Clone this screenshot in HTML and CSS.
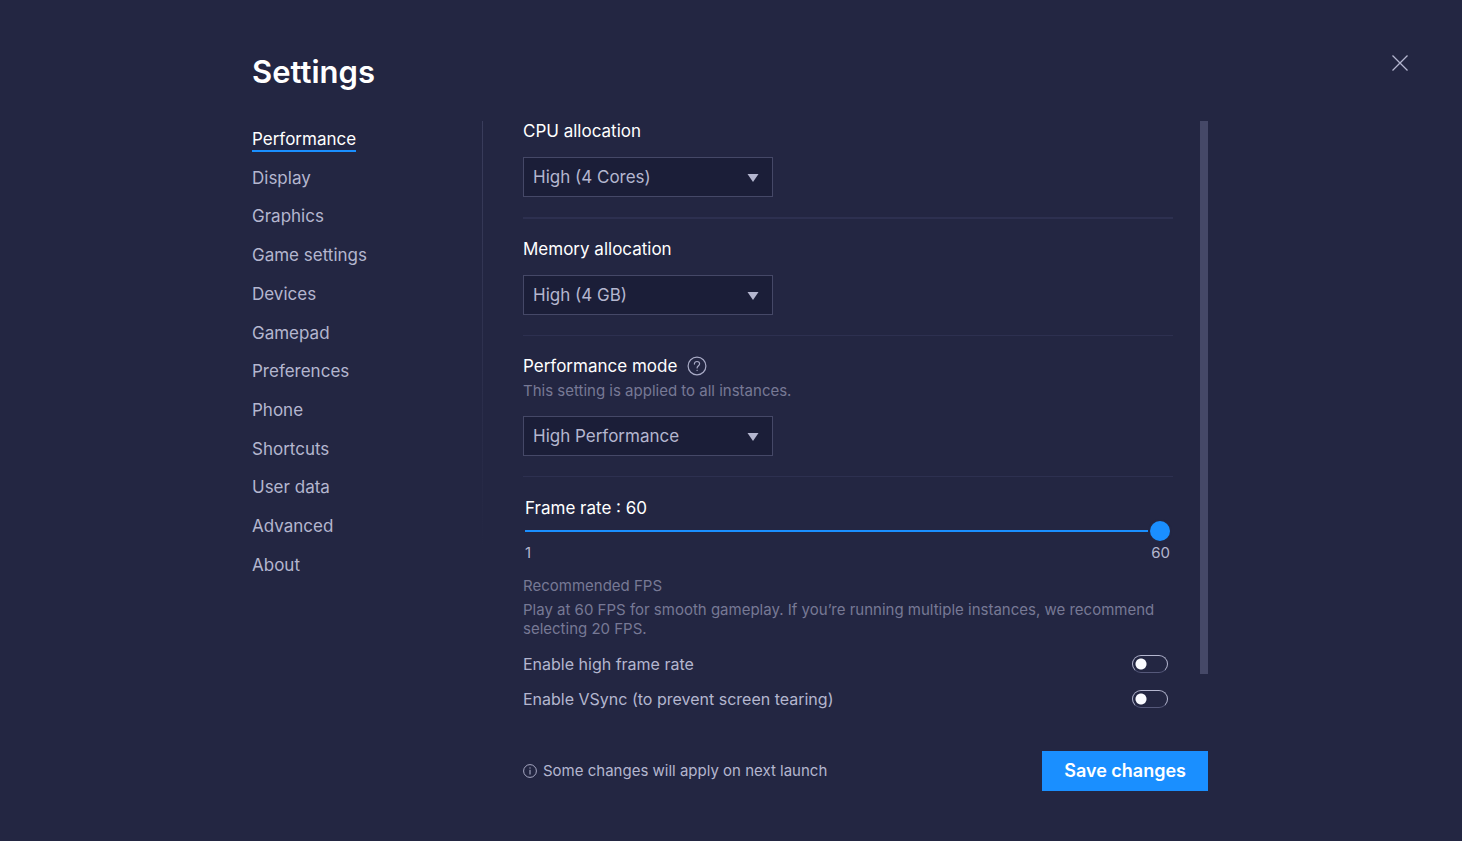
FILE: index.html
```html
<!DOCTYPE html>
<html lang="en">
<head>
<meta charset="utf-8">
<title>Settings</title>
<meta name="viewport" content="width=device-width, initial-scale=1">
<link rel="stylesheet" href="styles.css">
</head>
<body>
<div class="page">
  <header class="header">
    <h1 class="title">Settings</h1>
    <button class="close" type="button" aria-label="Close">
      <svg width="18" height="18" viewBox="0 0 18 18" fill="none" stroke="currentColor" stroke-width="1.3"><path d="M1.5 1.5 16.5 16.5M16.5 1.5 1.5 16.5"/></svg>
    </button>
  </header>
  <main class="layout">
    <nav class="nav">
      <a class="nav-link active" href="#performance">Performance</a>
      <a class="nav-link" href="#display">Display</a>
      <a class="nav-link" href="#graphics">Graphics</a>
      <a class="nav-link" href="#game">Game settings</a>
      <a class="nav-link" href="#devices">Devices</a>
      <a class="nav-link" href="#gamepad">Gamepad</a>
      <a class="nav-link" href="#preferences">Preferences</a>
      <a class="nav-link" href="#phone">Phone</a>
      <a class="nav-link" href="#shortcuts">Shortcuts</a>
      <a class="nav-link" href="#userdata">User data</a>
      <a class="nav-link" href="#advanced">Advanced</a>
      <a class="nav-link" href="#about">About</a>
    </nav>
    <div class="rule"></div>
    <form class="panel">
      <div class="scroll">
        <div class="sections">
          <section class="section first">
            <label class="label" for="cpu">CPU allocation</label>
            <div class="select-box">
              <select id="cpu" class="select"><option>High (4 Cores)</option></select>
              <svg class="arrow" width="12" height="8" viewBox="0 0 12 8" fill="currentColor"><path d="M.5 0h11L6 8z"/></svg>
            </div>
          </section>
          <section class="section">
            <label class="label" for="memory">Memory allocation</label>
            <div class="select-box">
              <select id="memory" class="select"><option>High (4 GB)</option></select>
              <svg class="arrow" width="12" height="8" viewBox="0 0 12 8" fill="currentColor"><path d="M.5 0h11L6 8z"/></svg>
            </div>
          </section>
          <section class="section">
            <div class="label-row">
              <label class="label" for="mode">Performance mode</label>
              <svg class="help" width="20" height="20" viewBox="0 0 20 20" fill="none" stroke="currentColor" stroke-width="1.2"><circle cx="10" cy="10" r="8.9"/><path d="M7.4 8.1C7.4 6.4 8.5 5.5 10 5.5s2.6.9 2.6 2.3c0 1.900-2.500 2-2.500 4.200" stroke-linecap="round"/><circle cx="10.100" cy="14.300" r=".4" fill="currentColor" stroke-width=".6"/></svg>
            </div>
            <p class="hint">This setting is applied to all instances.</p>
            <div class="select-box">
              <select id="mode" class="select"><option>High Performance</option></select>
              <svg class="arrow" width="12" height="8" viewBox="0 0 12 8" fill="currentColor"><path d="M.5 0h11L6 8z"/></svg>
            </div>
          </section>
          <section class="frame">
            <div class="slider">
              <label class="label" for="fps">Frame rate : 60</label>
              <input id="fps" class="range" type="range" min="1" max="60" value="60">
              <div class="limits"><span>1</span><span>60</span></div>
            </div>
            <p class="note">Recommended FPS</p>
            <p class="note">Play at 60 FPS for smooth gameplay. If you’re running multiple instances, we recommend selecting 20 FPS.</p>
            <div class="toggles">
              <div class="toggle-row"><label for="high">Enable high frame rate</label><input id="high" class="toggle" type="checkbox"></div>
              <div class="toggle-row"><label for="vsync">Enable VSync (to prevent screen tearing)</label><input id="vsync" class="toggle" type="checkbox"></div>
            </div>
          </section>
        </div>
        <div class="scrollbar"><div class="thumb"></div></div>
      </div>
      <footer class="footer">
        <p class="info">
          <svg width="14" height="14" viewBox="0 0 14 14" fill="none" stroke="currentColor"><circle cx="7" cy="7" r="6.400" stroke-width=".9"/><path d="M7 5.800v4.700M7 3.400v1.200"/></svg>
          <span>Some changes will apply on next launch</span>
        </p>
        <button class="save" type="submit">Save changes</button>
      </footer>
    </form>
  </main>
</div>
</body>
</html>
```
FILE: styles.css
```css
* { box-sizing: border-box; }

body {
  margin: 0;
  min-height: 100vh;
  background: #232642;
  color: #b4b6cf;
  font: 17px/20px Inter, Roboto, sans-serif;
}

h1, p { margin: 0; }

button, input, select { font: inherit; }

.page { padding: 52px 52px 50px 252px; }

.header {
  display: flex;
  justify-content: space-between;
  align-items: flex-start;
}

.title {
  color: #fff;
  font-size: 31px;
  font-weight: 600;
  line-height: 40px;
}

.close {
  display: flex;
  padding: 2px 1px;
  border: 0;
  background: none;
  color: #b4b6cf;
}

.layout {
  display: grid;
  grid-template-columns: 230px 1px 1fr;
  margin: 29px 202px 0 0;
}

.nav {
  display: flex;
  flex-direction: column;
  justify-content: space-between;
  align-items: flex-start;
  align-self: start;
  min-height: 457px;
  padding-top: 8px;
}

.nav-link {
  border-bottom: 2px solid transparent;
  color: inherit;
  line-height: 21px;
  text-decoration: none;
}

.nav-link.active {
  border-color: #1a8fff;
  color: #fff;
}

.rule {
  align-self: start;
  height: 430px;
  background: linear-gradient(#3a3d5c, #232642);
}

.panel { padding-left: 40px; }

.scroll {
  display: flex;
  justify-content: space-between;
  gap: 27px;
}

.sections { flex: 1; }

.section {
  padding-bottom: 20px;
  border-bottom: 1px solid #2d3050;
  margin-bottom: 20px;
}

.section.first { border-bottom-width: 2px; }

.label {
  display: block;
  color: #fff;
}

.label-row {
  display: flex;
  align-items: center;
  gap: 10px;
}

.help { color: #a9abc6; }

.hint, .note {
  color: #777995;
  font-size: 15px;
  line-height: 19px;
}

.hint { margin-top: 5px; }

.select-box {
  display: grid;
  align-items: center;
  width: 250px;
  margin-top: 16px;
}

.select, .arrow { grid-area: 1 / 1; }

.select {
  appearance: none;
  height: 40px;
  padding: 0 36px 0 9px;
  border: 1px solid #454867;
  border-radius: 0;
  background: #1b1e38;
  color: inherit;
}

.arrow {
  justify-self: end;
  margin: 2px 14px 0 0;
  pointer-events: none;
}

.frame { padding-top: 1px; }

.slider { padding: 0 3px 0 2px; }

.range {
  appearance: none;
  display: block;
  width: 100%;
  height: 20px;
  margin: 3px 0 2px;
  background: linear-gradient(#1a8fff, #1a8fff) center / 100% 2px no-repeat;
}

.range::-webkit-slider-thumb {
  appearance: none;
  width: 20px;
  height: 20px;
  border-radius: 50%;
  background: #1a8fff;
  box-shadow: 0 0 0 2px #232642;
}

.limits {
  display: flex;
  justify-content: space-between;
  font-size: 15px;
}

.note { margin-top: 5px; }

.slider + .note { margin-top: 13px; }

.toggles {
  display: grid;
  gap: 15px;
  margin-top: 16px;
  font-size: 16px;
}

.toggle-row {
  display: flex;
  justify-content: space-between;
  align-items: center;
  padding-right: 5px;
}

.toggle {
  appearance: none;
  width: 36px;
  height: 18px;
  margin: 0;
  border: 1px solid #b4b6cf;
  border-bottom-color: #55587a;
  border-radius: 9px;
  background: radial-gradient(circle at 8px 8px, #fafbff 5px, transparent 6px);
}

.scrollbar { width: 8px; }

.thumb {
  height: 94%;
  background: #454867;
}

.footer {
  display: flex;
  justify-content: space-between;
  align-items: center;
  margin-top: 42px;
}

.info {
  display: flex;
  align-items: center;
  gap: 6px;
  font-size: 15px;
}

.save {
  height: 40px;
  padding: 0 22px;
  border: 0;
  background: #1a8fff;
  color: #fff;
  font-size: 18px;
  font-weight: 600;
}
```
